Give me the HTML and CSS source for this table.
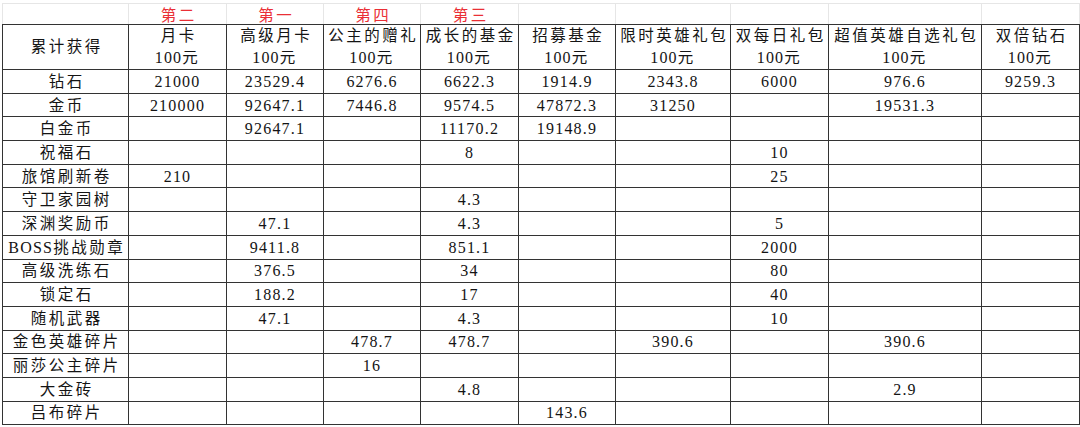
FILE: index.html
```html
<!DOCTYPE html>
<html lang="zh-CN">
<head>
<meta charset="utf-8">
<title>累计获得</title>
<link rel="stylesheet" href="styles.css">
</head>
<body>
<table class="sheet">
  <colgroup>
    <col class="c-name"><col class="c-std"><col class="c-std2"><col class="c-std2"><col class="c-std"><col class="c-std2"><col class="c-wide"><col class="c-std"><col class="c-xwide"><col class="c-std">
  </colgroup>
  <tr class="rank">
    <td></td><td>第二</td><td>第一</td><td>第四</td><td>第三</td><td></td><td></td><td></td><td></td><td></td>
  </tr>
  <tr class="head">
    <td class="cn">累计获得</td>
    <td class="cn">月卡<br><span class="amt">100</span>元</td>
    <td class="cn">高级月卡<br><span class="amt">100</span>元</td>
    <td class="cn">公主的赠礼<br><span class="amt">100</span>元</td>
    <td class="cn">成长的基金<br><span class="amt">100</span>元</td>
    <td class="cn">招募基金<br><span class="amt">100</span>元</td>
    <td class="cn">限时英雄礼包<br><span class="amt">100</span>元</td>
    <td class="cn">双每日礼包<br><span class="amt">100</span>元</td>
    <td class="cn">超值英雄自选礼包<br><span class="amt">100</span>元</td>
    <td class="cn">双倍钻石<br><span class="amt">100</span>元</td>
  </tr>
  <tr><td class="cn">钻石</td><td>21000</td><td>23529.4</td><td>6276.6</td><td>6622.3</td><td>1914.9</td><td>2343.8</td><td>6000</td><td>976.6</td><td>9259.3</td></tr>
  <tr><td class="cn">金币</td><td>210000</td><td>92647.1</td><td>7446.8</td><td>9574.5</td><td>47872.3</td><td>31250</td><td></td><td>19531.3</td><td></td></tr>
  <tr><td class="cn">白金币</td><td></td><td>92647.1</td><td></td><td>11170.2</td><td>19148.9</td><td></td><td></td><td></td><td></td></tr>
  <tr><td class="cn">祝福石</td><td></td><td></td><td></td><td>8</td><td></td><td></td><td>10</td><td></td><td></td></tr>
  <tr><td class="cn">旅馆刷新卷</td><td>210</td><td></td><td></td><td></td><td></td><td></td><td>25</td><td></td><td></td></tr>
  <tr><td class="cn">守卫家园树</td><td></td><td></td><td></td><td>4.3</td><td></td><td></td><td></td><td></td><td></td></tr>
  <tr><td class="cn">深渊奖励币</td><td></td><td>47.1</td><td></td><td>4.3</td><td></td><td></td><td>5</td><td></td><td></td></tr>
  <tr><td class="cn"><span class="amt">BOSS</span>挑战勋章</td><td></td><td>9411.8</td><td></td><td>851.1</td><td></td><td></td><td>2000</td><td></td><td></td></tr>
  <tr><td class="cn">高级洗练石</td><td></td><td>376.5</td><td></td><td>34</td><td></td><td></td><td>80</td><td></td><td></td></tr>
  <tr><td class="cn">锁定石</td><td></td><td>188.2</td><td></td><td>17</td><td></td><td></td><td>40</td><td></td><td></td></tr>
  <tr><td class="cn">随机武器</td><td></td><td>47.1</td><td></td><td>4.3</td><td></td><td></td><td>10</td><td></td><td></td></tr>
  <tr><td class="cn">金色英雄碎片</td><td></td><td></td><td>478.7</td><td>478.7</td><td></td><td>390.6</td><td></td><td>390.6</td><td></td></tr>
  <tr><td class="cn">丽莎公主碎片</td><td></td><td></td><td>16</td><td></td><td></td><td></td><td></td><td></td><td></td></tr>
  <tr><td class="cn">大金砖</td><td></td><td></td><td></td><td>4.8</td><td></td><td></td><td></td><td>2.9</td><td></td></tr>
  <tr><td class="cn">吕布碎片</td><td></td><td></td><td></td><td></td><td>143.6</td><td></td><td></td><td></td><td></td></tr>
</table>
</body>
</html>
```

FILE: styles.css
```css
html, body {
  margin: 0;
  padding: 0;
  background: #ffffff;
}

body {
  padding: 3px 0 0 2px;
}

.sheet {
  border-collapse: collapse;
  table-layout: fixed;
  width: 1077px;
  font-family: "Liberation Serif", "Noto Sans CJK SC", serif;
  font-size: 16px;
  color: #141414;
}

.c-name { width: 126px; }
.c-std { width: 98px; }
.c-std2 { width: 97px; }
.c-wide { width: 115px; }
.c-xwide { width: 153px; }

.sheet td {
  border: 1px solid #333333;
  padding: 0;
  text-align: center;
  vertical-align: middle;
  white-space: nowrap;
  overflow: hidden;
  letter-spacing: 1.2px;
  line-height: 21px;
}

.sheet td.cn {
  font-family: "Liberation Serif", "Noto Sans CJK SC", serif;
  font-size: 15.5px;
  font-weight: 400;
  letter-spacing: 2.5px;
  text-indent: 2.5px;
}

.amt {
  font-size: 16px;
  font-weight: 400;
  letter-spacing: 1.2px;
}

.sheet tr {
  height: 23.7px;
}

.sheet tr.rank {
  height: 21px;
}

.sheet tr.rank td {
  border: 1px solid #e6e6e6;
  border-bottom-color: #333333;
  color: #ea2f36;
  font-family: "Noto Sans CJK SC", sans-serif;
  font-size: 15.5px;
  font-weight: 400;
  letter-spacing: 2.5px;
  text-indent: 2.5px;
  line-height: 20px;
}

.sheet tr.head {
  height: 44px;
}

.sheet tr.head td {
  line-height: 22px;
}
```
